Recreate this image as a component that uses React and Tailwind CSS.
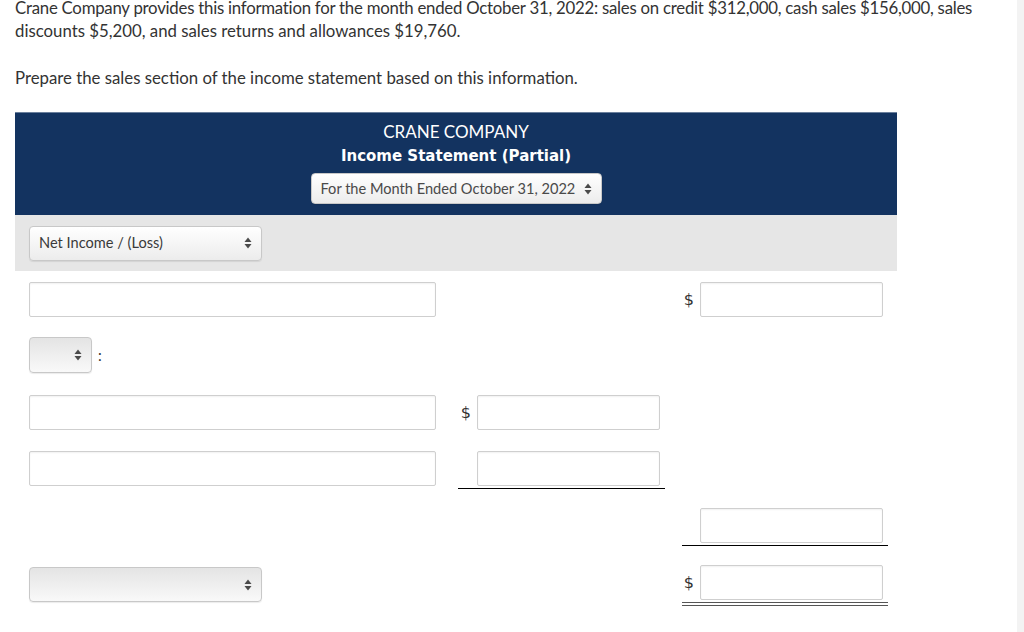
// Sales section worksheet — header band, account selects, money inputs with rules
function Arrows() {
  return (
    <svg width="8" height="12" viewBox="0 0 8 12" className="shrink-0">
      <path d="M4 0.5 L7.5 5 L0.5 5 Z" fill="#4a4a4a" />
      <path d="M0.5 7 L7.5 7 L4 11.5 Z" fill="#4a4a4a" />
    </svg>
  )
}

function Select({ label, className = '', tone = 'light' }) {
  const bg =
    tone === 'light'
      ? 'bg-gradient-to-b from-white to-[#ececec]'
      : 'bg-gradient-to-b from-[#e4e4e4] to-[#f9f9f9]'
  return (
    <div
      className={`flex items-center justify-between rounded-[4px] border border-[#c8c8c8] ${bg} pl-[9px] pr-[9px] text-[14.6px] text-[#3a3a3a] shadow-[0_1px_1px_rgba(0,0,0,0.08)] ${className}`}
    >
      <span className="whitespace-nowrap">{label}</span>
      <Arrows />
    </div>
  )
}

function Input({ className = '' }) {
  return (
    <div
      className={`h-[35px] rounded-[2px] border border-[#cfcfcf] bg-white shadow-[inset_0_1px_2px_rgba(0,0,0,0.06)] ${className}`}
    />
  )
}

function Money({ dollar, rule }) {
  const ruleCls =
    rule === 'single'
      ? 'border-b border-black pb-[2px]'
      : rule === 'double'
      ? 'border-b-[4px] border-double border-[#555] pb-[2px]'
      : ''
  return (
    <div className={`flex items-center justify-end pr-[5px] ${ruleCls}`}>
      {dollar && (
        <span className="mr-[6px] text-[16px] text-[#333]" style={{ fontFamily: '"DejaVu Sans", sans-serif' }}>
          $
        </span>
      )}
      <Input className="w-[183px]" />
    </div>
  )
}

function Row({ h, left, mid, right }) {
  return (
    <div className={`flex items-start pl-[14px] ${h}`}>
      <div className="w-[407px]">{left}</div>
      <div className="ml-[22px] w-[207px]">{mid}</div>
      <div className="ml-[17px] w-[206px]">{right}</div>
    </div>
  )
}

export default function App() {
  return (
    <div
      className="flex h-[632px] w-[1024px] overflow-hidden bg-white text-[#333]"
      style={{ fontFamily: 'Lato, "Open Sans", sans-serif' }}
    >
      <div className="flex-1 pl-[15px]">
        <p className="mt-[-4px] text-[16.8px] leading-[23px]">
          <span className="whitespace-nowrap tracking-[-0.24px]">
            Crane Company provides this information for the month ended October 31, 2022: sales on credit $312,000,
            cash sales $156,000, sales
          </span>
          <br />
          discounts $5,200, and sales returns and allowances $19,760.
        </p>
        <p className="mt-[24px] text-[16.8px] leading-[23px]">
          Prepare the sales section of the income statement based on this information.
        </p>

        <div className="mt-[23px] w-[882px]">
          <div className="flex flex-col items-center border-t border-[#6a7f9c] bg-[#133360] pt-[9px] pb-[11px] text-white">
            <div className="text-[17px] leading-[20px]">CRANE COMPANY</div>
            <div
              className="mt-[4px] text-[15px] font-bold leading-[20px]"
              style={{ fontFamily: '"DejaVu Sans", sans-serif' }}
            >
              Income Statement (Partial)
            </div>
            <Select
              label="For the Month Ended October 31, 2022"
              className="mt-[7px] h-[31px] w-[291px] text-[#4a4a4a]"
            />
          </div>
          <div className="flex h-[56px] items-center bg-[#e6e6e6] pl-[14px]">
            <Select label="Net Income / (Loss)" className="h-[35px] w-[233px]" />
          </div>

          <div className="pt-[11px]">
            <Row h="h-[55px]" left={<Input className="w-[407px]" />} right={<Money dollar />} />
            <Row
              h="h-[58px]"
              left={
                <div className="flex items-center">
                  <Select label="" tone="dark" className="h-[36px] w-[63px]" />
                  <span className="ml-[6px] text-[15px]">:</span>
                </div>
              }
            />
            <Row h="h-[56px]" left={<Input className="w-[407px]" />} mid={<Money dollar />} />
            <Row h="h-[57px]" left={<Input className="w-[407px]" />} mid={<Money rule="single" />} />
            <Row h="h-[57px]" right={<Money rule="single" />} />
            <Row
              h="h-[50px]"
              left={<Select label="" tone="dark" className="mt-[2px] h-[35px] w-[233px]" />}
              right={<Money dollar rule="double" />}
            />
          </div>
        </div>
      </div>
      <div className="w-[7px] shrink-0 bg-[#f3f3f3]" />
    </div>
  )
}
